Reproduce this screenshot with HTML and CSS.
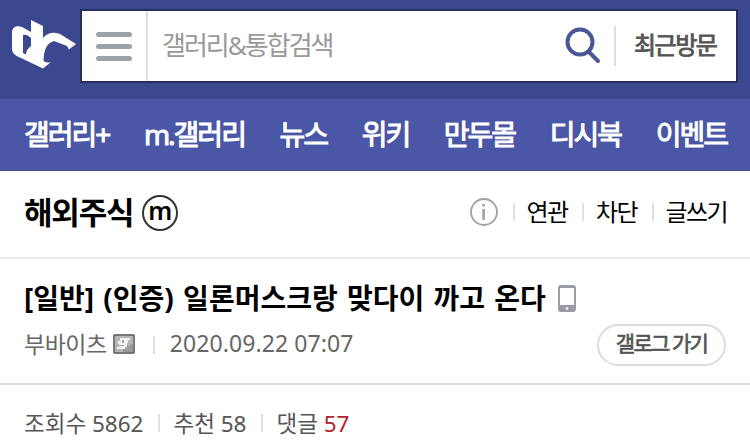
FILE: index.html
```html
<!DOCTYPE html>
<html lang="ko">
<head>
    <meta charset="UTF-8">
    <meta name="viewport" content="width=device-width, initial-scale=1.0">
    <title>해외주식 갤러리</title>
    <link rel="stylesheet" href="styles.css">
</head>
<body>
    <header class="header">
        <a class="logo" href="#">
            <svg width="68" height="52" viewBox="0 0 68 52">
                <path fill="#fff" fill-rule="evenodd" d="M20 0 L32 6 V18 C37 12 43 12 49 14 L65 24 L58 29.500 L56 26 L43 21 C36 23 33 29 32.500 41 Q36 43.500 40 42 L32 48.500 L10 38 C3 35 1 33 1 28 V13 C1 7 5 5 11 7 L20 12 Z M12 15 V33 L15 34.500 C15 31 17 28 20 26 V18 Q16 14 12 15 Z"/>
            </svg>
        </a>
        <div class="search">
            <button class="menu-btn"><span></span><span></span><span></span></button>
            <input class="search-input" type="text" placeholder="갤러리&amp;통합검색">
            <button class="search-btn">
                <svg width="36" height="38" viewBox="0 0 36 38" fill="none" stroke="#4b5694">
                    <circle cx="15" cy="16" r="12.500" stroke-width="4"/>
                    <path d="M24 26 L33 35" stroke-width="4" stroke-linecap="round"/>
                </svg>
            </button>
            <button class="recent-btn">최근방문</button>
        </div>
    </header>

    <nav class="gnb">
        <a href="#">갤러리+</a>
        <a href="#">m.갤러리</a>
        <a href="#">뉴스</a>
        <a href="#">위키</a>
        <a href="#">만두몰</a>
        <a href="#">디시북</a>
        <a href="#">이벤트</a>
    </nav>

    <section class="gallery-head">
        <h2 class="gallery-name">해외주식</h2>
        <span class="minor-mark">m</span>
        <div class="gallery-links">
            <svg class="info" width="28" height="28" viewBox="0 0 28 28">
                <circle cx="14" cy="14" r="13" fill="none" stroke="#a0a1a8" stroke-width="1.800"/>
                <path fill="#a0a1a8" d="M12.300 6 h2.600 v2.600 h-2.600 z M12.300 11 h2.600 v11 h-2.600 z"/>
            </svg>
            <i class="bar"></i>
            <a href="#">연관</a>
            <i class="bar"></i>
            <a href="#">차단</a>
            <i class="bar"></i>
            <a class="write" href="#">글쓰기</a>
        </div>
    </section>

    <section class="post-head">
        <div class="post-title">
            <h3>[일반] (인증) 일론머스크랑 맞다이 까고 온다</h3>
            <svg width="18" height="27" viewBox="0 0 18 27">
                <path fill="#9b9da6" fill-rule="evenodd" d="M3 0 H15 Q18 0 18 3 V24 Q18 27 15 27 H3 Q0 27 0 24 V3 Q0 0 3 0 Z M2 3 V20 H16 V3 Z"/>
                <circle cx="9" cy="23.500" r="1.300" fill="#fff"/>
            </svg>
        </div>
        <div class="post-info">
            <span class="nick">부바이츠</span>
            <svg class="nick-icon" width="22" height="20" viewBox="0 0 22 20">
                <path fill="#777" d="M1 0 H21 V1 H22 V19 H21 V20 H1 V19 H0 V1 H1 Z"/>
                <path fill="#b5b5b5" d="M2 2 H20 V18 H2 Z"/>
                <path fill="#999" d="M20 10 V18 H10 V15 H14 V12 H17 V10 Z"/>
                <path fill="#f2f2f2" d="M7 4 H17 V6 H15 V9 H14 V13 H12 V15 H4 V13 H6 V10 H5 V7 H7 Z"/>
                <path fill="#aaa" d="M9 6 H11 V9 H9 Z M6 11 H11 V12 H6 Z"/>
            </svg>
            <i class="bar"></i>
            <span class="date">2020.09.22 07:07</span>
            <a class="gallog" href="#">갤로그 가기</a>
        </div>
    </section>

    <div class="post-stats">
        <span>조회수 5862</span>
        <i class="bar"></i>
        <span>추천 58</span>
        <i class="bar"></i>
        <span>댓글 <em>57</em></span>
    </div>
</body>
</html>
```
FILE: styles.css
```css
* {
    box-sizing: border-box;
}
body {
    margin: 0;
    width: 750px;
    height: 444px;
    overflow: hidden;
    background-color: #fff;
    font-family: "Noto Sans", "Noto Sans CJK KR", sans-serif;
    color: #000;
}
a {
    color: inherit;
    text-decoration: none;
}
button {
    border: none;
    padding: 0;
    background: none;
    font-family: inherit;
}
h2, h3 {
    margin: 0;
}
.bar {
    width: 2px;
    height: 18px;
    background-color: #dfe0e6;
}

/* header */
.header {
    display: flex;
    height: 99px;
    padding: 9px 12px 0 11px;
    background-color: #3b4890;
}
.logo {
    width: 69px;
    padding-top: 11px;
}
.search {
    display: flex;
    align-items: center;
    width: 658px;
    height: 74px;
    border: 2px solid #292f5d;
    background-color: #fff;
}
.menu-btn {
    display: flex;
    flex-direction: column;
    justify-content: center;
    gap: 7px;
    width: 66px;
    height: 100%;
    padding-left: 14px;
    border-right: 2px solid #dddfe5;
}
.menu-btn span {
    width: 36px;
    height: 5px;
    border-radius: 3px;
    background-color: #9fa1a9;
}
.search-input {
    width: 417px;
    padding: 0 0 3px 14px;
    border: none;
    font-family: inherit;
    font-size: 26px;
    letter-spacing: -2px;
}
.search-input::placeholder {
    color: #999;
}
.search-btn {
    width: 51px;
    height: 40px;
    border-right: 2px solid #dedede;
    text-align: left;
}
.recent-btn {
    padding: 0 0 5px 18px;
    font-size: 24px;
    letter-spacing: -1.5px;
    color: #555;
    -webkit-text-stroke: 0.9px #555;
}

/* navigation */
.gnb {
    display: flex;
    justify-content: space-between;
    align-items: center;
    height: 72px;
    padding: 0 22px 4px 24px;
    background-color: #4a56a6;
    border-bottom: 1px solid #434d83;
    font-size: 28px;
    letter-spacing: -2px;
    color: #fff;
    -webkit-text-stroke: 1px #fff;
}
.gnb a:last-child {
    margin-right: 1px;
}

/* gallery title */
.gallery-head {
    display: flex;
    align-items: center;
    height: 88px;
    padding: 0 22px 4px 24px;
    border-bottom: 2px solid #e8e8e8;
}
.gallery-name {
    padding-bottom: 4px;
    font-size: 31px;
    letter-spacing: -1.2px;
}
.minor-mark {
    width: 36px;
    height: 36px;
    margin: 2px 0 0 9px;
    border: 2px solid #333;
    border-radius: 50%;
    font-size: 25px;
    font-weight: 600;
    line-height: 26px;
    text-align: center;
}
.gallery-links {
    display: flex;
    align-items: center;
    margin-left: auto;
    font-size: 24px;
    letter-spacing: -1.6px;
}
.gallery-links a {
    padding-bottom: 4px;
}
.gallery-links .bar {
    margin: 0 12px 0 14.5px;
}
.gallery-links .write {
    margin-right: 1px;
}

/* post title */
.post-head {
    height: 126px;
    padding: 19px 24px 0;
    border-bottom: 2px solid #dddee3;
}
.post-title {
    display: flex;
    align-items: center;
    gap: 12px;
    height: 40px;
}
.post-title h3 {
    padding-bottom: 3px;
    font-size: 28px;
    letter-spacing: 0;
    word-spacing: 2px;
    white-space: nowrap;
}
.post-info {
    display: flex;
    align-items: center;
    height: 53px;
    font-size: 23px;
    color: #666;
}
.nick, .date {
    padding-bottom: 3px;
}
.nick {
    letter-spacing: -0.5px;
}
.date {
    letter-spacing: 0.1px;
}
.nick-icon {
    margin: 0 0 2px 6px;
}
.post-info .bar {
    margin: 0 15px 0 18px;
}
.gallog {
    width: 129px;
    height: 42px;
    margin-left: auto;
    border: 2px solid #dcdde0;
    border-radius: 21px;
    font-size: 21px;
    line-height: 34px;
    text-align: center;
    letter-spacing: -1.8px;
    color: #555;
    -webkit-text-stroke: 0.7px #555;
}

/* view counts */
.post-stats {
    display: flex;
    align-items: center;
    height: 60px;
    padding: 14px 24px 0;
    font-size: 22.5px;
    color: #555;
}
.post-stats .bar {
    margin: 2px 13.5px 0 14.5px;
}
.post-stats em {
    font-style: normal;
    color: #b4232b;
}
```
